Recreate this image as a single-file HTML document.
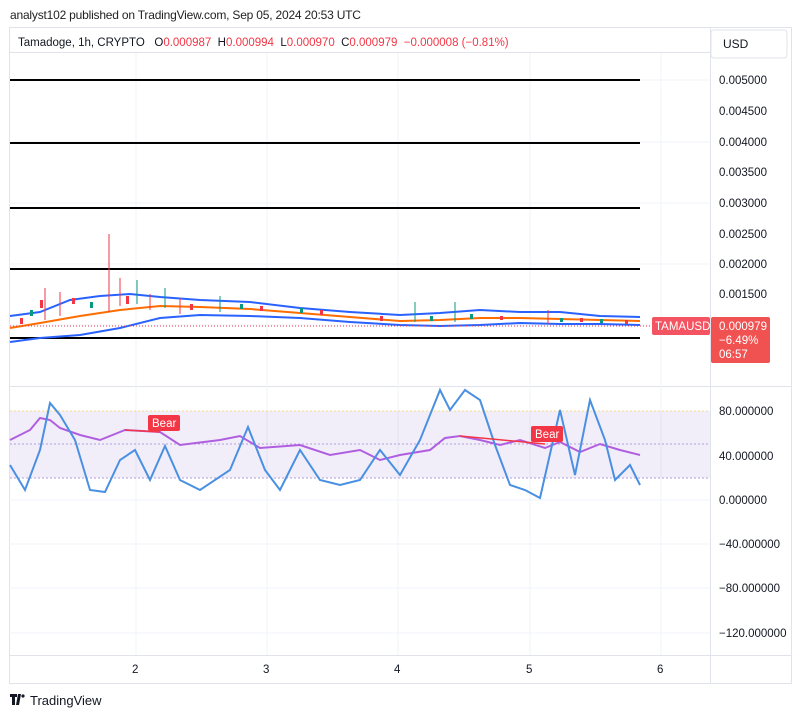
<!DOCTYPE html>
<html><head><style>
body{margin:0;width:802px;height:718px;background:#fff;font-family:"Liberation Sans",sans-serif;overflow:hidden;position:relative}
.t{position:absolute;white-space:nowrap}
</style></head><body>
<div class="t" style="left:10px;top:8px;font-size:12px;color:#222;letter-spacing:-0.2px">analyst102 published on TradingView.com, Sep 05, 2024 20:53 UTC</div>
<svg width="802" height="718" style="position:absolute;left:0;top:0" font-family="Liberation Sans, sans-serif">
<rect x="9.5" y="27.5" width="782" height="656" fill="none" stroke="#e0e3eb"/>
<line x1="710.5" y1="27" x2="710.5" y2="683" stroke="#e0e3eb"/>
<line x1="9" y1="386.5" x2="792" y2="386.5" stroke="#e0e3eb"/>
<line x1="9" y1="655.5" x2="792" y2="655.5" stroke="#e0e3eb"/>
<g stroke="#f0f3fa">
<line x1="136" y1="52" x2="136" y2="655"/><line x1="267" y1="52" x2="267" y2="655"/><line x1="398" y1="52" x2="398" y2="655"/><line x1="530" y1="52" x2="530" y2="655"/><line x1="661" y1="52" x2="661" y2="655"/>
<line x1="9" y1="80" x2="710" y2="80"/><line x1="9" y1="142" x2="710" y2="142"/><line x1="9" y1="203" x2="710" y2="203"/><line x1="9" y1="264" x2="710" y2="264"/><line x1="9" y1="325" x2="710" y2="325"/>
<line x1="9" y1="500" x2="710" y2="500"/><line x1="9" y1="544" x2="710" y2="544"/><line x1="9" y1="588" x2="710" y2="588"/><line x1="9" y1="633" x2="710" y2="633"/>
</g>
<line x1="9" y1="52.5" x2="710" y2="52.5" stroke="#e0e3eb"/>
<g stroke="#000" stroke-width="2">
<line x1="10" y1="80" x2="640" y2="80"/><line x1="10" y1="143" x2="640" y2="143"/><line x1="10" y1="208" x2="640" y2="208"/><line x1="10" y1="269" x2="640" y2="269"/><line x1="10" y1="338" x2="640" y2="338"/>
</g>
<path d="M10 316 L40 312 L70 300 L100 296 L130 294 L160 297 L200 300 L250 302 L300 308 L350 312 L400 315 L440 313 L480 310 L520 312 L560 312 L600 316 L640 317" fill="none" stroke="#2962ff" stroke-width="2"/>
<path d="M10 342 L40 338 L80 335 L120 328 L160 318 L200 315 L250 316 L300 318 L350 322 L400 325 L440 326 L480 325 L520 323 L560 324 L600 324 L640 325" fill="none" stroke="#2962ff" stroke-width="2"/>
<path d="M10 328 L40 323 L80 316 L120 310 L160 306 L200 307 L250 309 L300 313 L350 317 L400 321 L440 320 L480 318 L520 318 L560 319 L600 320 L640 321" fill="none" stroke="#ff6d00" stroke-width="2"/>
<line x1="10" y1="326" x2="650" y2="326" stroke="#f23645" stroke-dasharray="1 2"/>
<g stroke="#f23645"><line x1="109" y1="234" x2="109" y2="312"/><line x1="120" y1="278" x2="120" y2="306"/><line x1="45" y1="288" x2="45" y2="320"/><line x1="548" y1="310" x2="548" y2="324"/><line x1="60" y1="292" x2="60" y2="316"/><line x1="150" y1="294" x2="150" y2="310"/><line x1="180" y1="298" x2="180" y2="314"/></g>
<g stroke="#089981"><line x1="137" y1="280" x2="137" y2="304"/><line x1="165" y1="288" x2="165" y2="308"/><line x1="415" y1="302" x2="415" y2="322"/><line x1="455" y1="302" x2="455" y2="322"/><line x1="220" y1="296" x2="220" y2="312"/></g>
<g fill="#f23645"><rect x="20" y="318" width="3" height="6"/><rect x="40" y="300" width="3" height="8"/><rect x="72" y="298" width="3" height="6"/><rect x="126" y="296" width="3" height="8"/><rect x="190" y="304" width="3" height="6"/><rect x="260" y="306" width="3" height="5"/><rect x="320" y="310" width="3" height="5"/><rect x="380" y="316" width="3" height="5"/><rect x="500" y="316" width="3" height="4"/><rect x="580" y="318" width="3" height="4"/><rect x="625" y="320" width="3" height="4"/></g>
<g fill="#089981"><rect x="30" y="310" width="3" height="6"/><rect x="90" y="302" width="3" height="6"/><rect x="240" y="304" width="3" height="5"/><rect x="300" y="308" width="3" height="5"/><rect x="430" y="316" width="3" height="5"/><rect x="470" y="314" width="3" height="5"/><rect x="560" y="318" width="3" height="4"/><rect x="600" y="319" width="3" height="4"/></g>
<rect x="652" y="317" width="58" height="18" rx="2" fill="#f23645" opacity=".85"/>
<text x="655" y="330" font-size="11.5" fill="#fff">TAMAUSD</text>
<rect x="711" y="317" width="59" height="46" rx="2" fill="#f05252"/>
<text x="719" y="330" font-size="11.5" fill="#fff">0.000979</text>
<text x="719" y="344" font-size="11.5" fill="#fff">−6.49%</text>
<text x="719" y="358" font-size="11.5" fill="#fff">06:57</text>
<g font-size="11.5" fill="#131722">
<text x="719" y="84">0.005000</text><text x="719" y="115">0.004500</text><text x="719" y="146">0.004000</text><text x="719" y="176">0.003500</text><text x="719" y="207">0.003000</text><text x="719" y="238">0.002500</text><text x="719" y="268">0.002000</text><text x="719" y="298">0.001500</text>
<text x="719" y="415">80.000000</text><text x="719" y="460">40.000000</text><text x="719" y="504">0.000000</text><text x="719" y="548">−40.000000</text><text x="719" y="592">−80.000000</text><text x="719" y="637">−120.000000</text>
<text x="132" y="673">2</text><text x="263" y="673">3</text><text x="394" y="673">4</text><text x="526" y="673">5</text><text x="657" y="673">6</text>
</g>
<rect x="10" y="411" width="700" height="67" fill="#7e57c2" opacity=".1"/>
<g stroke="#b39ddb" stroke-dasharray="2 2"><line x1="10" y1="411" x2="710" y2="411"/><line x1="10" y1="444" x2="710" y2="444"/><line x1="10" y1="478" x2="710" y2="478"/></g>
<line x1="10" y1="411" x2="710" y2="411" stroke="#f5d98a" stroke-dasharray="2 2"/>
<path d="M10 440 L30 430 L40 418 L50 420 L60 428 L80 435 L100 440 L125 430 L160 432 L180 445 L220 440 L240 436 L260 448 L300 445 L330 455 L360 450 L380 460 L400 455 L430 450 L445 438 L460 436 L480 440 L500 445 L520 440 L545 448 L560 442 L580 452 L600 444 L620 450 L640 455" fill="none" stroke="#b05ee0" stroke-width="2"/>
<path d="M10 465 L25 490 L40 450 L50 403 L60 415 L75 440 L90 490 L105 492 L120 460 L135 450 L150 480 L165 446 L180 480 L200 490 L230 470 L248 427 L265 470 L280 490 L300 450 L320 480 L340 485 L360 480 L380 450 L400 475 L420 440 L440 390 L450 410 L465 390 L480 400 L495 445 L510 485 L525 490 L540 498 L560 410 L575 475 L590 400 L605 440 L615 480 L630 465 L640 485" fill="none" stroke="#4a90e2" stroke-width="2"/>
<line x1="125" y1="430" x2="160" y2="432" stroke="#f23645" stroke-width="1.5"/>
<line x1="460" y1="436" x2="545" y2="444" stroke="#f23645" stroke-width="1.5"/>
<rect x="148" y="415" width="32" height="16" rx="2" fill="#f23645"/><text x="152" y="427" font-size="11.5" fill="#fff">Bear</text>
<rect x="531" y="426" width="32" height="16" rx="2" fill="#f23645"/><text x="535" y="438" font-size="11.5" fill="#fff">Bear</text>
<rect x="711" y="30" width="76" height="28" rx="3" fill="#fff" stroke="#e0e3eb"/>
<text x="723" y="48" font-size="12" fill="#131722">USD</text>
<text x="18" y="46" font-size="11.5" fill="#131722" xml:space="preserve">Tamadoge, 1h, CRYPTO   O<tspan fill="#f23645">0.000987</tspan>  H<tspan fill="#f23645">0.000994</tspan>  L<tspan fill="#f23645">0.000970</tspan>  C<tspan fill="#f23645">0.000979</tspan>  <tspan fill="#f23645">−0.000008 (−0.81%)</tspan></text>
<path d="M10 694h7v3h-2v8h-3v-8h-2zM18 694h3l-2 11h-3z" fill="#131722"/><circle cx="23" cy="696" r="1.6" fill="#131722"/>
<text x="30" y="705" font-size="13" fill="#131722">TradingView</text>
</svg>
</body></html>
